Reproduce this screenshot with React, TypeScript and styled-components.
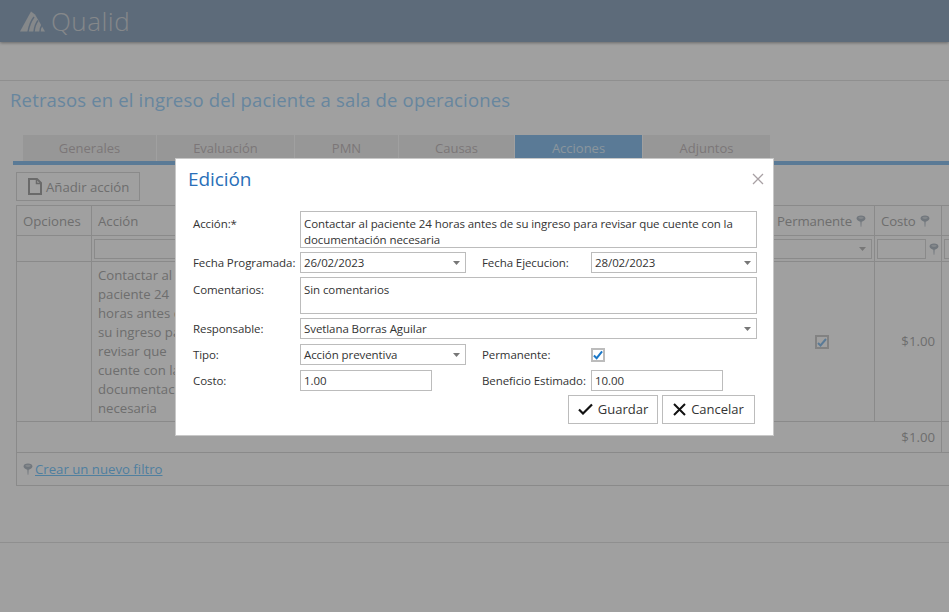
import React from "react";
import styled, { createGlobalStyle } from "styled-components";

const GlobalStyle = createGlobalStyle`
  html, body {
    margin: 0;
    padding: 0;
    height: 100%;
    background: #fefefe;
    overflow: hidden;
  }
  * {
    box-sizing: border-box;
  }
  body {
    font-family: "Open Sans", "Liberation Sans", sans-serif;
  }
`;

function Pin() {
  return (
    <PinSvg width="10" height="12" viewBox="0 0 9 11">
      <path d="M4.5 0.5C7 0.5 8.6 1.7 8.6 3.2C8.6 4.6 6.6 5.9 5.1 6.1L4.8 10.8H4.2L3.9 6.1C2.4 5.9 0.4 4.6 0.4 3.2C0.4 1.7 2 0.5 4.5 0.5Z" fill="currentColor" />
      <ellipse cx="4.5" cy="2.6" rx="2.5" ry="1" fill="#fff" opacity="0.4" />
    </PinSvg>
  );
}

function Caret() {
  return (
    <svg width="7" height="4" viewBox="0 0 7 4">
      <path d="M0 0h7L3.5 4z" fill="currentColor" />
    </svg>
  );
}

function Logo() {
  return (
    <svg width="25" height="21" viewBox="0 0 25 21">
      <path d="M11 0.5 L0 20.5 H25 L15 3.5 Z" fill="#d3d7db" />
      <path d="M8 21 C9 15 11 10 14 6 M14 21 C14.5 16 16 12 18 9.5 M20 21 C20 18 21 15.5 22 14" stroke="#94aac2" strokeWidth="1.5" fill="none" />
    </svg>
  );
}

function Dropdown({ value, wide }: { value: string; wide?: boolean }) {
  return (
    <Select $wide={wide}>
      <span>{value}</span>
      <CaretBox>
        <Caret />
      </CaretBox>
    </Select>
  );
}

export default function App() {
  const tabs = [
    { name: "Generales", width: 133 },
    { name: "Evaluación", width: 137 },
    { name: "PMN", width: 103 },
    { name: "Causas", width: 115 },
    { name: "Acciones", width: 127, active: true },
    { name: "Adjuntos", width: 127 },
  ];

  return (
    <Page>
      <GlobalStyle />
      <Header>
        <Logo />
        <Brand>Qualid</Brand>
      </Header>
      <Content>
        <Title>Retrasos en el ingreso del paciente a sala de operaciones</Title>
        <Tabs>
          {tabs.map((t) => (
            <Tab key={t.name} $active={t.active} style={{ width: t.width }}>
              {t.name}
            </Tab>
          ))}
        </Tabs>
        <Toolbar>
          <AddButton>
            <svg width="14" height="17" viewBox="0 0 14 17">
              <path d="M1 1h8l4 4v11H1z" fill="none" stroke="#a9a9a9" strokeWidth="2" />
              <path d="M8.5 1v4.5H13" fill="none" stroke="#a9a9a9" strokeWidth="1.5" />
            </svg>
            Añadir acción
          </AddButton>
        </Toolbar>
        <Grid>
          <colgroup>
            <col style={{ width: 75 }} />
            <col style={{ width: 112 }} />
            <col style={{ width: 567 }} />
            <col style={{ width: 104 }} />
            <col style={{ width: 67 }} />
            <col style={{ width: 60 }} />
          </colgroup>
          <thead>
            <HeadRow>
              <th>Opciones</th>
              <th>Acción</th>
              <th></th>
              <th>
                <HeadLabel>
                  Permanente <Pin />
                </HeadLabel>
              </th>
              <th>
                <HeadLabel>
                  Costo <Pin />
                </HeadLabel>
              </th>
              <th></th>
            </HeadRow>
            <FilterRow>
              <td></td>
              <td>
                <FilterInput />
              </td>
              <td></td>
              <td>
                <FilterSelect>
                  <CaretBox>
                    <Caret />
                  </CaretBox>
                </FilterSelect>
              </td>
              <td>
                <FilterPair>
                  <FilterInput />
                  <Pin />
                </FilterPair>
              </td>
              <td>
                <FilterInput />
              </td>
            </FilterRow>
          </thead>
          <tbody>
            <DataRow>
              <td></td>
              <td>Contactar al paciente 24 horas antes de su ingreso para revisar que cuente con la documentación necesaria</td>
              <td></td>
              <CenterCell>
                <GridCheck>
                  <svg width="10" height="9" viewBox="0 0 10 9">
                    <path d="M1 5l2.5 2.5L9 1" fill="none" stroke="#8fc2ee" strokeWidth="2" />
                  </svg>
                </GridCheck>
              </CenterCell>
              <MoneyCell>$1.00</MoneyCell>
              <td></td>
            </DataRow>
            <TotalRow>
              <td colSpan={4}></td>
              <MoneyCell>$1.00</MoneyCell>
              <td></td>
            </TotalRow>
            <LinkRow>
              <td colSpan={6}>
                <LinkWrap>
                  <Pin />
                  <FilterLink>Crear un nuevo filtro</FilterLink>
                </LinkWrap>
              </td>
            </LinkRow>
          </tbody>
        </Grid>
      </Content>
      <BottomRule />

      <Overlay>
        <Modal>
          <ModalHead>
            <ModalTitle>Edición</ModalTitle>
            <svg width="12" height="12" viewBox="0 0 12 12">
              <path d="M1 1l10 10M11 1L1 11" stroke="#a8a0a4" strokeWidth="1.3" />
            </svg>
          </ModalHead>
          <Form>
            <Label $tall>Acción:*</Label>
            <Area>Contactar al paciente 24 horas antes de su ingreso para revisar que cuente con la documentación necesaria</Area>

            <Label>Fecha Programada:</Label>
            <Dropdown value="26/02/2023" />
            <Label $second>Fecha Ejecucion:</Label>
            <Dropdown value="28/02/2023" />

            <Label $tall>Comentarios:</Label>
            <Area>Sin comentarios</Area>

            <Label>Responsable:</Label>
            <Dropdown value="Svetlana Borras Aguilar" wide />

            <Label>Tipo:</Label>
            <Dropdown value="Acción preventiva" />
            <Label $second>Permanente:</Label>
            <CheckBox>
              <svg width="11" height="10" viewBox="0 0 11 10">
                <path d="M1 5.5l3 3L10 1" fill="none" stroke="#1b78c8" strokeWidth="2.2" />
              </svg>
            </CheckBox>

            <Label>Costo:</Label>
            <NumberField>1.00</NumberField>
            <Label $second>Beneficio Estimado:</Label>
            <NumberField>10.00</NumberField>
          </Form>
          <Actions>
            <ActionButton $width={90}>
              <svg width="15" height="12" viewBox="0 0 15 12">
                <path d="M1 6.5l4 4L14 1.5" fill="none" stroke="#111" strokeWidth="2.2" />
              </svg>
              Guardar
            </ActionButton>
            <ActionButton $width={93}>
              <svg width="13" height="13" viewBox="0 0 13 13">
                <path d="M1 1l11 11M12 1L1 12" stroke="#111" strokeWidth="2" />
              </svg>
              Cancelar
            </ActionButton>
          </Actions>
        </Modal>
      </Overlay>
    </Page>
  );
}

const Page = styled.div`
  position: relative;
  width: 949px;
  height: 612px;
  overflow: hidden;
  background: #fefefe;
`;

const Header = styled.header`
  height: 42px;
  background: #94aac2;
  display: flex;
  align-items: center;
  gap: 6px;
  padding: 0 0 0 20px;
  box-shadow: 0 1px 3px rgba(0, 0, 0, 0.35);
`;

const Brand = styled.div`
  font-family: "Open Sans", sans-serif;
  font-weight: 300;
  font-size: 26px;
  color: #d3d7db;
  letter-spacing: 0.5px;
`;

const Content = styled.main`
  margin-top: 38px;
  height: 462px;
  border-top: 1px solid #e3e3e3;
  padding-left: 10px;
`;

const Title = styled.h1`
  margin: 0;
  padding-top: 6px;
  height: 54px;
  font-size: 18.5px;
  letter-spacing: 0.16px;
  line-height: 26px;
  font-weight: 400;
  color: #a4d4fa;
`;

const Tabs = styled.nav`
  display: flex;
  margin-left: 3px;
  padding-left: 10px;
  border-bottom: 4px solid #8fc2ee;
  height: 30px;
`;

const Tab = styled.div<{ $active?: boolean }>`
  height: 26px;
  margin-right: 1px;
  background: ${(p) => (p.$active ? "#8fc2ee" : "#f0f0f0")};
  color: ${(p) => (p.$active ? "#dcecf8" : "#c4bcbe")};
  font-size: 13px;
  line-height: 27px;
  text-align: center;
`;

const Toolbar = styled.div`
  padding: 7px 0 4px 6px;
`;

const AddButton = styled.div`
  width: 124px;
  height: 29px;
  border: 1px solid #dbdbdb;
  display: flex;
  align-items: center;
  gap: 4px;
  padding-left: 11px;
  font-size: 13.2px;
  color: #aeaeae;
`;

const Grid = styled.table`
  margin-left: 6px;
  width: 985px;
  table-layout: fixed;
  border-collapse: collapse;
  font-size: 13.2px;
  color: #aeaeae;

  th,
  td {
    border: 1px solid #dbdbdb;
    padding: 0 6px;
    text-align: left;
    font-weight: 400;
  }
`;

const HeadRow = styled.tr`
  height: 30px;

  th {
    padding-top: 1px;
  }
`;

const HeadLabel = styled.span`
  display: inline-flex;
  align-items: center;
  gap: 4px;
  letter-spacing: -0.1px;
  white-space: nowrap;
`;

const PinSvg = styled.svg`
  color: #b4bdc7;
  flex: none;
`;

const CaretBox = styled.span`
  color: #777;
  display: flex;
  align-items: center;
  padding: 0 2px 0 3px;
`;

const FilterRow = styled.tr`
  height: 26px;

  td {
    padding: 0 2px;
  }
`;

const FilterInput = styled.div`
  height: 20px;
  width: 100%;
  border: 1px solid #dbdbdb;
`;

const FilterSelect = styled(FilterInput)`
  display: flex;
  justify-content: flex-end;
  margin-left: -4px;
  width: calc(100% + 4px);

  ${CaretBox} {
    color: #bdbdbd;
    padding-right: 5px;
  }
`;

const FilterPair = styled.div`
  display: flex;
  align-items: center;
  gap: 3px;
`;

const DataRow = styled.tr`
  height: 160px;
  line-height: 19px;
`;

const CenterCell = styled.td`
  && {
    text-align: center;
  }
`;

const MoneyCell = styled.td`
  && {
    text-align: right;
    padding-right: 6px;
  }
`;

const GridCheck = styled.span`
  display: inline-flex;
  align-items: center;
  justify-content: center;
  width: 14px;
  height: 14px;
  margin-right: 2px;
  border: 2px solid #cfcfcf;
  vertical-align: middle;
`;

const TotalRow = styled.tr`
  height: 31px;

  td + td {
    border-left: none;
  }

  td:first-child {
    border-right: none;
  }

  td:last-child {
    border-right: none;
  }
`;

const LinkRow = styled.tr`
  height: 33px;
`;

const LinkWrap = styled.div`
  display: flex;
  align-items: center;
  gap: 2px;
  margin-bottom: 1px;
`;

const FilterLink = styled.span`
  color: #7ecafc;
  text-decoration: underline;
`;

const BottomRule = styled.div`
  border-top: 1px solid #e3e3e3;
`;

const Overlay = styled.div`
  position: absolute;
  inset: 0;
  background: rgba(0, 0, 0, 0.37);
  padding: 159px 0 0 176px;
`;

const Modal = styled.section`
  width: 597px;
  height: 276px;
  background: #fff;
  outline: 1px solid #c8c8c8;
  color: #333;
  font-size: 11.5px;
  letter-spacing: -0.08px;
`;

const ModalHead = styled.div`
  height: 52px;
  padding: 6px 9px 0 12px;
  display: flex;
  align-items: flex-start;
  justify-content: space-between;

  svg {
    margin-top: 8px;
  }
`;

const ModalTitle = styled.h2`
  margin: 0;
  font-size: 19px;
  line-height: 28px;
  font-weight: 400;
  color: #2a6fb8;
`;

const Form = styled.div`
  display: grid;
  margin-left: 17px;
  width: 564px;
  grid-template-columns: 107px 166px 125px 166px;
  grid-template-rows: 37px 21px 37px 22px 22px 21px;
  row-gap: 4px;
  align-items: start;
`;

const Label = styled.div<{ $tall?: boolean; $second?: boolean }>`
  line-height: 21px;
  white-space: nowrap;
  padding-top: ${(p) => (p.$tall ? "2px" : "0")};
  padding-left: ${(p) => (p.$second ? "16px" : "0")};
`;

const Field = styled.div`
  border: 1px solid #bcbcbc;
  padding: 0 3px;
  height: 21px;
  line-height: 19px;
  white-space: nowrap;
`;

const Area = styled(Field)`
  grid-column: 2 / -1;
  height: 37px;
  line-height: 16px;
  padding-top: 4px;
  white-space: normal;
`;

const Select = styled(Field)<{ $wide?: boolean }>`
  display: flex;
  justify-content: space-between;
  ${(p) => (p.$wide ? "grid-column: 2 / -1;" : "")}
`;

const NumberField = styled(Field)`
  width: 132px;
`;

const CheckBox = styled.div`
  width: 14px;
  height: 14px;
  margin-top: 4px;
  border: 2px solid #bcbcbc;
  display: flex;
  align-items: center;
  justify-content: center;
`;

const Actions = styled.div`
  display: flex;
  justify-content: flex-end;
  gap: 4px;
  margin-top: 4px;
  padding-right: 18px;
`;

const ActionButton = styled.div<{ $width: number }>`
  width: ${(p) => p.$width}px;
  height: 29px;
  border: 1px solid #bcbcbc;
  padding-bottom: 1px;
  display: flex;
  align-items: center;
  justify-content: center;
  gap: 5px;
  font-size: 13px;
  letter-spacing: 0;
  color: #333;
`;
